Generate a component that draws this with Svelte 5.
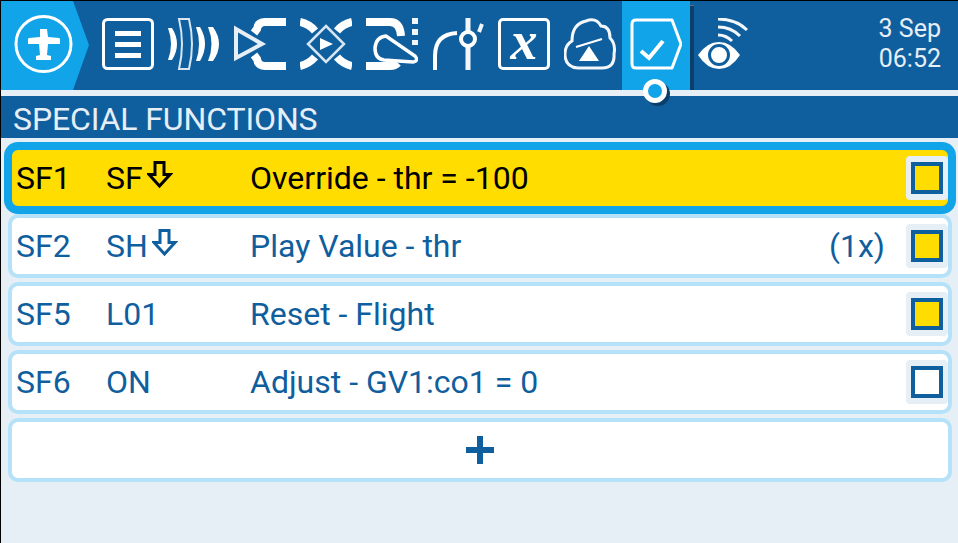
<script>
  const rows = [
    { id: 'SF1', sw: 'SF', down: true, text: 'Override - thr = -100', on: true, active: true },
    { id: 'SF2', sw: 'SH', down: true, text: 'Play Value - thr', rep: '(1x)', on: true },
    { id: 'SF5', sw: 'L01', text: 'Reset - Flight', on: true },
    { id: 'SF6', sw: 'ON', text: 'Adjust - GV1:co1 = 0', on: false }
  ];
</script>

<div class="screen">
  <header class="top">
    <div class="home">
      <svg width="60" height="60" viewBox="0 0 60 60">
        <circle cx="30.500" cy="30" r="27.500" fill="none" stroke="#fff" stroke-width="3"/>
        <path fill="#fff" d="M27 15h7l1 8 11 1q1 0 1 2v4H35l-1 11 4 1v4H23v-4l4-1-1-11H15v-4q0-2 1-2l11-1z"/>
      </svg>
    </div>
    <nav class="tabs">
      <div class="tab">
        <svg width="52" height="52" viewBox="0 0 52 52">
          <rect x="1.500" y="1.500" width="49" height="49" rx="4" fill="none" stroke="#fff" stroke-width="3"/>
          <path stroke="#fff" stroke-width="5" d="M13 15.500h26M13 26.500h26M13 37.500h26"/>
        </svg>
      </div>
      <div class="tab">
        <svg width="52" height="52" viewBox="0 0 52 52" fill="#fff">
          <path d="M0 10h4Q14 26 4 42H0Q6 26 0 10z"/>
          <path fill="none" stroke="#d7e6f2" stroke-width="2" d="M11 1h10Q27 26 21 51H11Q17 26 11 1z"/>
          <path d="M28 9h4Q42 26 32 43h-4Q34 26 28 9z"/>
          <path d="M40 9h5Q57 26 45 43h-5Q47 26 40 9z"/>
        </svg>
      </div>
      <div class="tab">
        <svg width="52" height="52" viewBox="0 0 52 52">
          <path fill="none" stroke="#fff" stroke-width="8" d="M52 4H31Q24 4 23 11L20 15M52 48H31Q24 48 23 41L20 37"/>
          <path fill="none" stroke="#e6eef6" stroke-width="4" d="M2 11 28 26 2 40z"/>
        </svg>
      </div>
      <div class="tab">
        <svg width="52" height="52" viewBox="0 0 52 52">
          <path fill="none" stroke="#fff" stroke-width="8" d="M0 4q9 2 15 9M52 4q-9 2-15 9M0 48q9-2 15-9M52 48q-9-2-15-9"/>
          <path fill="none" stroke="#d7e6f2" stroke-width="2.500" d="M26 8 44 26 26 44 8 26z"/>
          <path fill="#fff" d="M20 20 33 26 20 32z"/>
        </svg>
      </div>
      <div class="tab">
        <svg width="52" height="52" viewBox="0 0 52 52">
          <path fill="none" stroke="#fff" stroke-width="8" d="M0 4h24q10 0 11 14M0 48h24q5 0 8-3"/>
          <path fill="#0f5e9e" stroke="#fff" stroke-width="3.500" d="M9 30q1-11 11-12l29 20q4 5-2 6l-29-2Q9 41 9 30z"/>
          <path fill="#f3f7fb" d="M46 0h6v6h-6zM46 11h6v6h-6zM46 22h6v5h-6z"/>
        </svg>
      </div>
      <div class="tab">
        <svg width="52" height="52" viewBox="0 0 52 52">
          <path fill="none" stroke="#fff" stroke-width="4" d="M3 52V38Q3 16 25 15"/>
          <path fill="none" stroke="#f3f7fb" stroke-width="5" d="M36 0v13M36 29v23"/>
          <circle cx="36" cy="21" r="7" fill="none" stroke="#fff" stroke-width="4"/>
          <path stroke="#f3f7fb" stroke-width="4" d="M50 6 47 14"/>
        </svg>
      </div>
      <div class="tab">
        <div class="xbox"><span>x</span></div>
      </div>
      <div class="tab">
        <svg width="52" height="52" viewBox="0 0 52 52">
          <path fill="none" stroke="#f3f7fb" stroke-width="3" d="M14 50Q1 49 1 36 1 27 8 23 8 6 22 3 32-1 37 8 46 8 46 20 52 26 50 36 51 50 38 50z"/>
          <path stroke="#fff" stroke-width="2" d="M12 29 38 21"/>
          <path fill="#fff" d="M25 28 35 43H15z"/>
        </svg>
      </div>
      <div class="tab current">
        <svg width="52" height="52" viewBox="0 0 52 52">
          <path fill="none" stroke="#fff" stroke-width="3" stroke-linejoin="round" d="M2 6q0-4 4-4h36l9 24-9 24H6q-4 0-4-4z"/>
          <path fill="none" stroke="#fff" stroke-width="4" d="M11 33l8 7 14-17"/>
        </svg>
        <span class="dot"></span>
      </div>
      <div class="tab">
        <svg width="52" height="52" viewBox="0 0 52 52">
          <path fill="#fff" d="M2 37Q11 24 23 24 35 24 44 37 35 51 23 51 11 51 2 37z"/>
          <circle cx="23" cy="37" r="9.500" fill="none" stroke="#0f5e9e" stroke-width="3"/>
          <circle cx="23" cy="37" r="5.500" fill="#fff"/>
          <path fill="none" stroke="#f3f7fb" stroke-width="3" d="M22 1Q40 1 51 12M22 9Q35 9 44 18M22 17Q30 17 36 23"/>
        </svg>
      </div>
    </nav>
    <div class="clock"><span>3 Sep</span><span>06:52</span></div>
  </header>
  <div class="rule"></div>
  <h1 class="title">SPECIAL FUNCTIONS</h1>
  <main class="list">
    {#each rows as r}
      <div class="row" class:active={r.active}>
        <span class="id">{r.id}</span>
        <span class="sw">{r.sw}{#if r.down}<svg class="arrow" width="26" height="28" viewBox="0 0 26 28"><path fill="none" stroke="currentColor" stroke-width="3" d="M8 1.500h9v12h6L12.500 25 2 13.500h6z"/></svg>{/if}</span>
        <span class="desc">{r.text}</span>
        {#if r.rep}<span class="rep">{r.rep}</span>{/if}
        <span class="tile"><span class="box" class:on={r.on}></span></span>
      </div>
    {/each}
    <div class="row add">
      <svg width="28" height="28" viewBox="0 0 28 28"><path stroke="#0f5e9e" stroke-width="6" d="M0 14h28M14 0v28"/></svg>
    </div>
  </main>
</div>

<style>
  :global(body) { margin: 0; background: #000; }
  .screen {
    width: 957px;
    height: 542px;
    margin: 1px 0 0 1px;
    background: #e6eef6;
    font-family: Roboto, "Liberation Sans", sans-serif;
    overflow: hidden;
  }
  .top {
    height: 89px;
    display: flex;
    background: #0f5e9e;
  }
  .home {
    width: 88px;
    flex: none;
    background: #12a4e8;
    clip-path: polygon(0 0, 72px 0, 88px 44px, 72px 89px, 0 89px);
    display: flex;
    align-items: center;
    padding: 0 0 3px 12px;
    box-sizing: border-box;
  }
  .tabs {
    display: flex;
    margin-left: 6px;
  }
  .tab {
    position: relative;
    width: 66px;
    display: flex;
    justify-content: center;
    align-items: flex-start;
    padding-top: 17px;
    box-sizing: border-box;
  }
  .tab svg { position: relative; display: block; }
  .xbox {
    width: 52px;
    height: 52px;
    box-sizing: border-box;
    border: 3px solid #fff;
    border-radius: 5px;
    display: flex;
    align-items: center;
    justify-content: center;
    color: #fff;
    font-family: "Liberation Serif", serif;
    font-style: italic;
    font-weight: 700;
    font-size: 54px;
    line-height: 46px;
  }
  .xbox span { display: block; margin-top: -6px; }
  .current::before {
    content: "";
    position: absolute;
    left: -1px;
    right: -1px;
    top: 0;
    height: 90px;
    background: #12a4e8;
    box-shadow: 4px 4px 0 #5b7184;
  }
  .current::after {
    content: "";
    position: absolute;
    right: -5px;
    top: 5px;
    width: 4px;
    height: 85px;
    background: #0a3f6b;
  }
  .dot {
    position: absolute;
    left: 20px;
    top: 78px;
    width: 24px;
    height: 24px;
    box-sizing: border-box;
    border: 5px solid #fff;
    border-radius: 50%;
    background: #12a4e8;
    box-shadow: 3px 3px 0 #0a3f6b;
    z-index: 2;
  }
  .clock {
    margin-left: auto;
    padding: 13px 17px 0 0;
    display: flex;
    flex-direction: column;
    align-items: flex-end;
    color: #e6eef6;
    font-size: 25px;
    line-height: 30px;
  }
  .rule { height: 6px; background: #e6eef6; position: relative; }
  .title {
    margin: 0;
    height: 42px;
    padding-left: 12px;
    background: #0f5e9e;
    color: #e6eef6;
    font-size: 32px;
    font-weight: 400;
    line-height: 46px;
    letter-spacing: -0.12px;
  }
  .list {
    padding: 8px 6px 0 7px;
    display: flex;
    flex-direction: column;
    gap: 4px;
  }
  .row {
    height: 64px;
    box-sizing: border-box;
    border: 4px solid #b5e2f8;
    border-radius: 10px;
    background: #fff;
    color: #0f5e9e;
    display: flex;
    align-items: center;
    font-size: 32px;
    padding-left: 4px;
  }
  .row.active {
    background: #ffdd00;
    color: #000;
    border-color: #12a4e8;
    box-shadow: 0 0 0 4px #12a4e8;
  }
  .id { width: 90px; }
  .sw { width: 144px; display: flex; align-items: center; }
  .arrow { margin: -6px 0 0 4px; }
  .desc { flex: 1; }
  .rep { margin-right: 21px; }
  .tile {
    width: 42px;
    height: 44px;
    background: #e6eef6;
    border-radius: 4px;
    display: flex;
    align-items: center;
    justify-content: center;
  }
  .box {
    width: 32px;
    height: 32px;
    box-sizing: border-box;
    border: 4px solid #0f5e9e;
    background: #fff;
  }
  .box.on { background: #ffdd00; }
  .add { justify-content: center; padding-left: 0; }
  .add svg { display: block; }
</style>
